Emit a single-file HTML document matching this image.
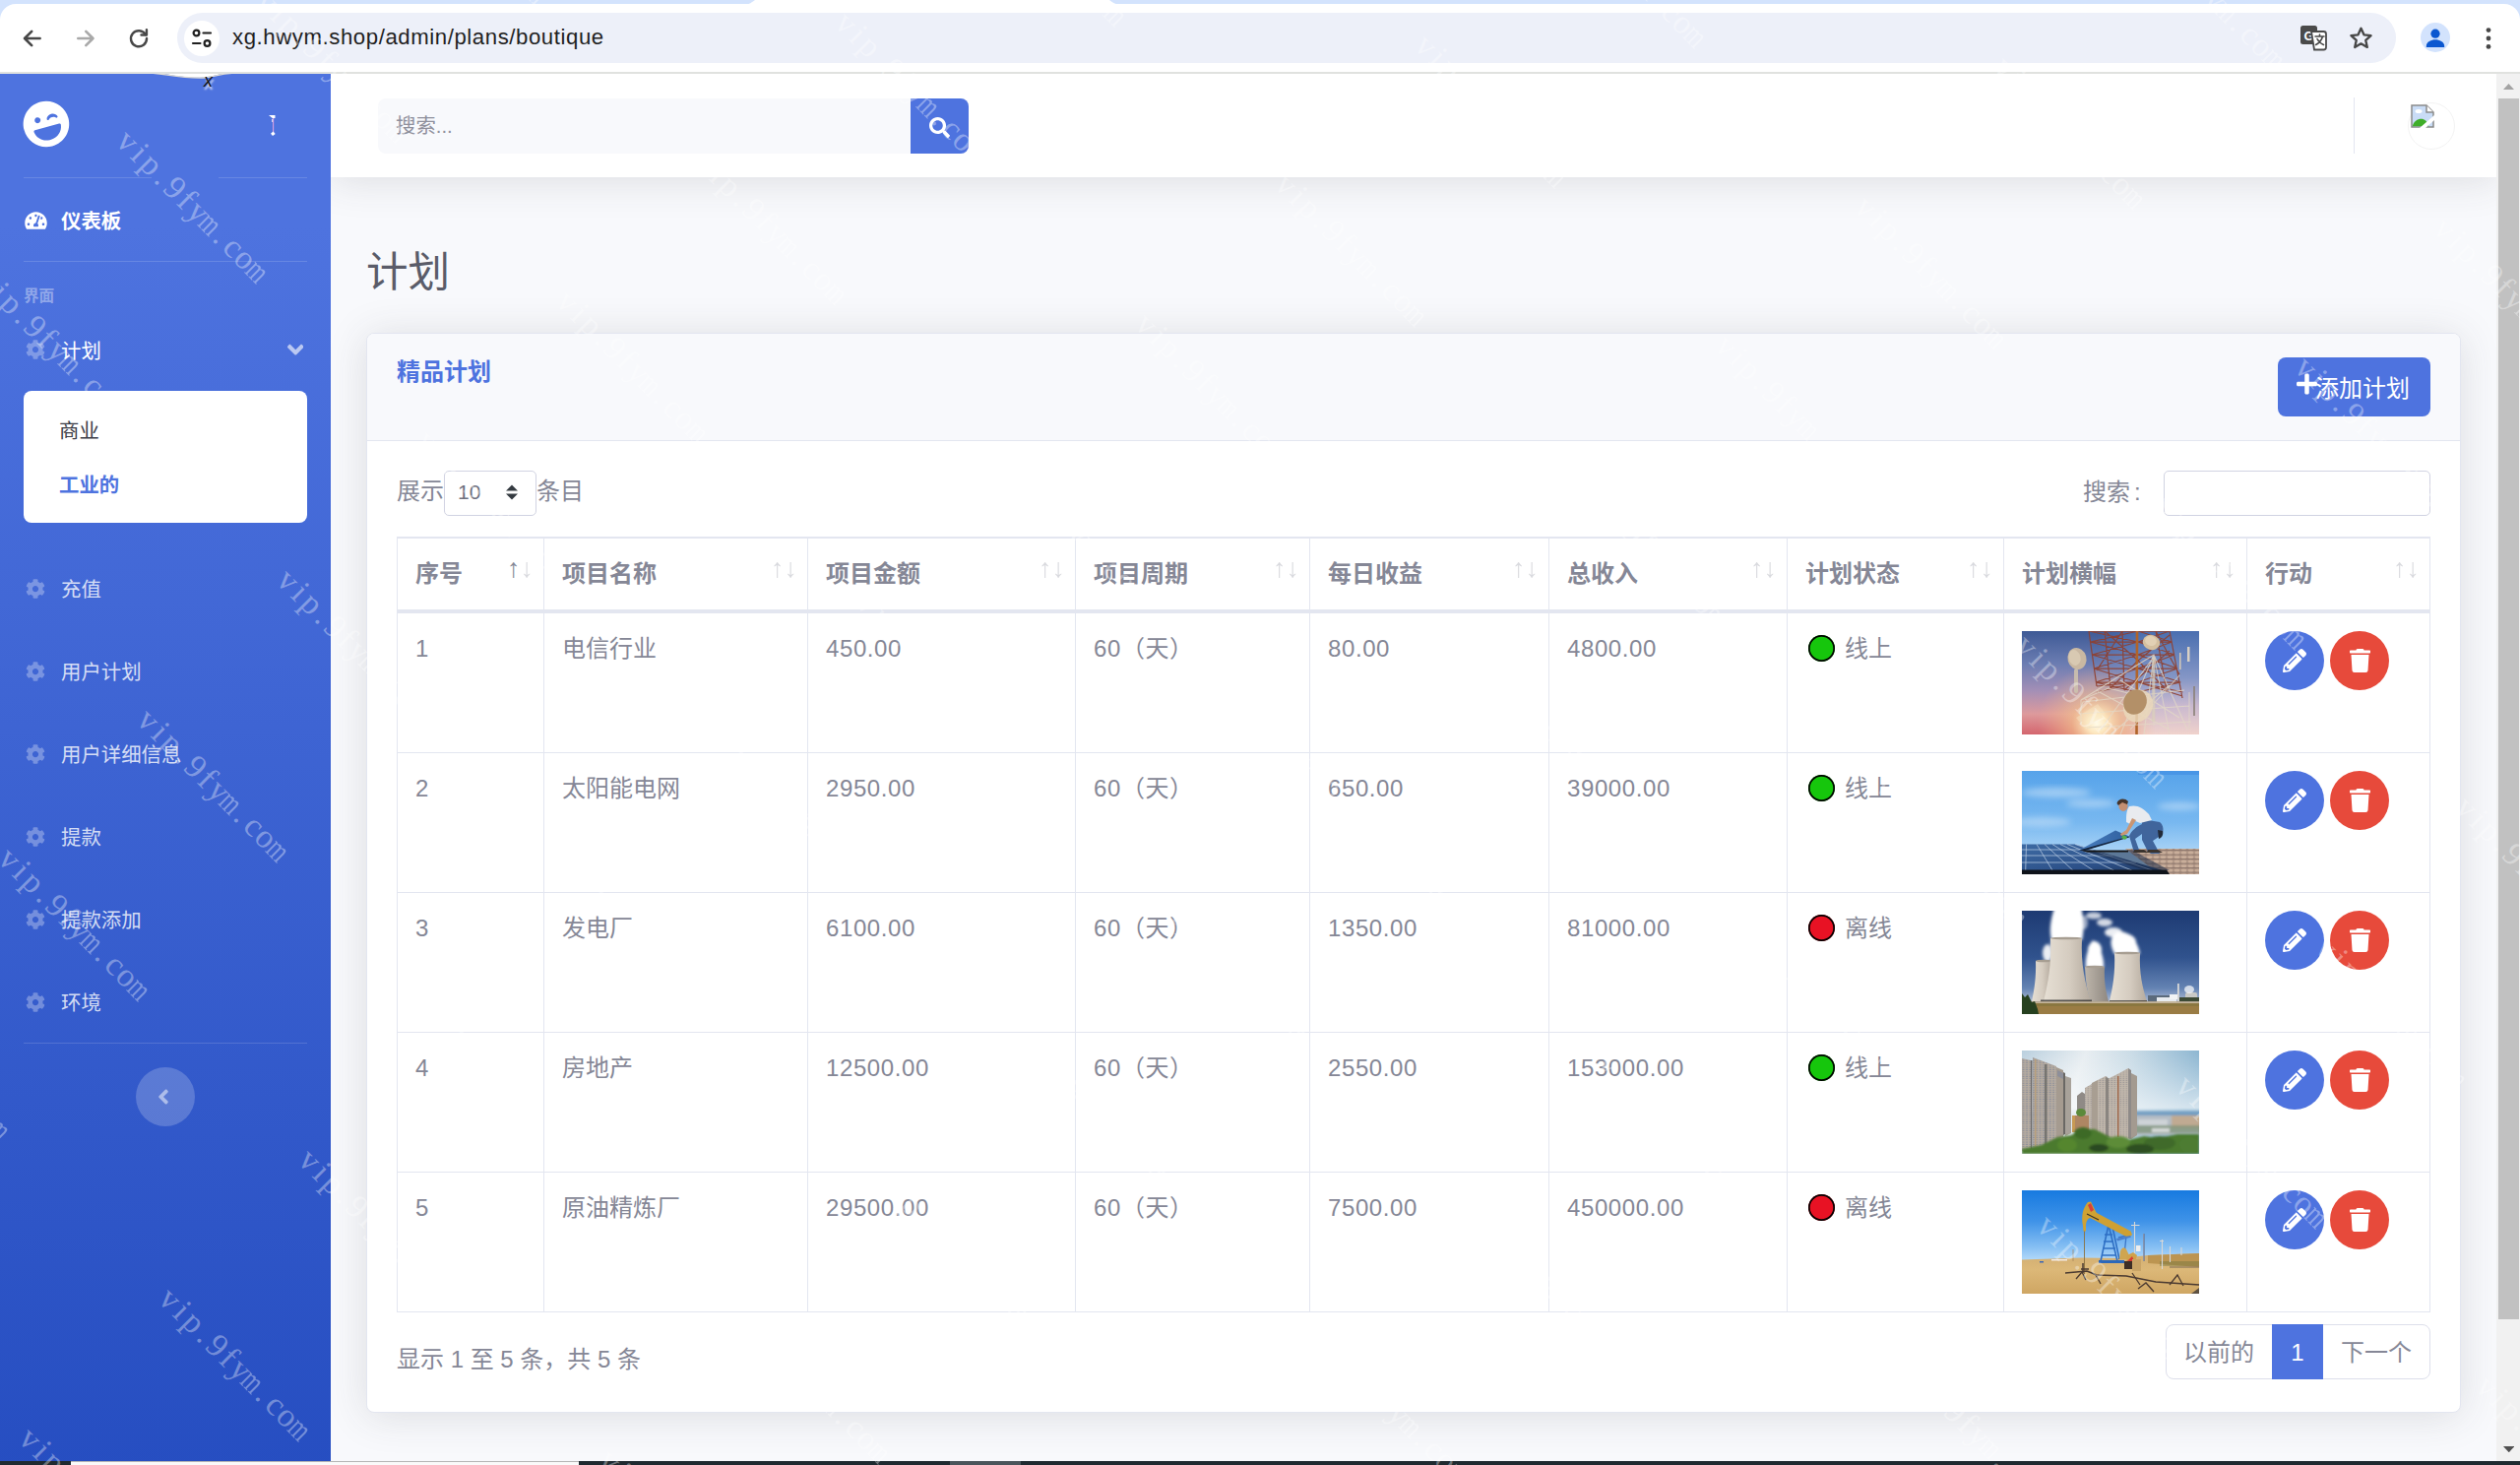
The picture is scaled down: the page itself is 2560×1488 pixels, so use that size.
<!DOCTYPE html>
<html lang="zh-CN">
<head>
<meta charset="utf-8">
<title>计划</title>
<style>
*{box-sizing:border-box;margin:0;padding:0}
html,body{width:2560px;height:1488px;overflow:hidden;background:#fff}
body{position:relative;font-family:"Liberation Sans","Noto Sans CJK SC",sans-serif;color:#858796;font-size:24px;line-height:36px}
.abs{position:absolute}
svg{display:block}

/* ---------- browser chrome ---------- */
#tabstrip{left:0;top:0;width:2560px;height:20px;background:#d3e3fd}
#toolbar{left:0;top:4px;width:2560px;height:71px;background:#fff;border-radius:16px 16px 0 0;border-bottom:2px solid #e0e2df}
#omni{left:180px;top:13px;width:2254px;height:51px;border-radius:26px;background:#edf0f9}
#siteinfo{left:187px;top:21px;width:36px;height:36px;border-radius:18px;background:#fff}
#url{left:236px;top:20px;height:36px;line-height:36px;font-size:22.200px;color:#1f1f1f;white-space:nowrap;letter-spacing:.570px}

/* ---------- sidebar ---------- */
#sidebar{left:0;top:75px;width:336px;height:1409px;background:linear-gradient(180deg,#4e73df 10%,#224abe 100%) 0 0/100% 1550px no-repeat;overflow:hidden}
.sdiv{position:absolute;left:24px;width:288px;height:0;border-top:1.5px solid rgba(255,255,255,.15)}
.navt{left:62px;height:36px;line-height:36px;color:rgba(255,255,255,.8);font-size:20.400px;white-space:nowrap}

#page{left:0;top:0;width:2560px;height:1488px;clip-path:inset(75px 0 4px 0)}
/* ---------- topbar ---------- */
#topbar{left:336px;top:75px;width:2201px;height:105px;background:#fff;box-shadow:0 3px 40px 0 rgba(58,59,69,.15)}
#content{left:336px;top:180px;width:2201px;height:1304px;background:#f8f9fc}

/* ---------- card ---------- */
#card{left:372px;top:338px;width:2128px;height:1097px;background:#fff;border:1px solid #e3e6f0;border-radius:8px;box-shadow:0 3px 40px 0 rgba(58,59,69,.15)}
#cardhead{left:0;top:0;width:100%;height:109px;background:#f8f9fc;border-bottom:1px solid #e3e6f0;border-radius:7px 7px 0 0}

/* ---------- table ---------- */
#tbl{left:403px;top:545px;border-collapse:separate;border-spacing:0;table-layout:fixed;width:2066px;color:#858796;border-left:1px solid #e3e6f0;border-top:2px solid #e3e6f0}
#tbl th,#tbl td{border-right:1px solid #e3e6f0;border-bottom:1px solid #e3e6f0;padding:0 0 0 18px;vertical-align:top;text-align:left;font-size:24px;line-height:36px;white-space:nowrap;position:relative;overflow:hidden}
#tbl th{height:76px;border-bottom:4px solid #e3e6f0;font-weight:bold;padding-top:18px}
#tbl td{height:142px;padding-top:18px}
#tbl td.n{letter-spacing:.600px}
.sort{position:absolute;right:10px;top:12px;font-size:27px;line-height:36px;font-weight:normal;color:#858796}
.sort b,.sort i{font-weight:normal;font-style:normal;opacity:.3}
.sort.act b{opacity:1}
.dot{display:inline-block;width:27px;height:27px;border-radius:14px;box-shadow:inset 0 0 0 1.700px #000;vertical-align:-5px;margin:0 10px 0 3px}
.g{background:#16c60c}.r{background:#e81224}
.btnc{position:absolute;top:18px;width:60px;height:60px;border-radius:30px;display:flex;align-items:center;justify-content:center}
.be{left:18px;background:#4e73df}.bd{left:84px;background:#e74a3b}
.thumb{position:absolute;left:18px;top:18px;width:180px;height:105px;overflow:hidden;background:#6aa3dd}
#wm{left:0;top:0;width:2560px;height:1488px;overflow:hidden;pointer-events:none}
#wm i{position:absolute;font:normal 34px/34px "Liberation Serif",serif;color:rgba(255,255,255,.36);white-space:nowrap;transform-origin:0 0;transform:rotate(45deg) translate(3px,-17px)}
#wm b{display:inline-block;width:16.900px;text-align:center;font-weight:normal}
#wm u{display:inline-block;text-decoration:none;transform:scaleX(.68);transform-origin:0 0}
</style>
</head>
<body>
<!-- ================= browser chrome ================= -->
<div id="tabstrip" class="abs"></div>
<div id="toolbar" class="abs"></div>
<svg class="abs" style="left:756px;top:0" width="382" height="5" viewBox="0 0 382 5"><path d="M0 4.500C5 4.500 8 2.500 11 0H371C374 2.500 377 4.500 382 4.500V5H0z" fill="#fff"/></svg>
<div id="omni" class="abs"></div>
<div id="siteinfo" class="abs"></div>
<svg class="abs" style="left:19px;top:24px" width="30" height="30" viewBox="0 0 30 30" fill="none" stroke="#474747" stroke-width="2.600" stroke-linecap="round" stroke-linejoin="round"><path d="M21.600 15H6M13.200 7.800L6 15l7.200 7.200"/></svg>
<svg class="abs" style="left:72px;top:24px" width="30" height="30" viewBox="0 0 30 30" fill="none" stroke="#a9a9a9" stroke-width="2.6" stroke-linecap="round" stroke-linejoin="round"><path d="M7.300 15H22.500M15.300 7.800L22.500 15l-7.200 7.200"/></svg>
<svg class="abs" style="left:127px;top:25px" width="28" height="28" viewBox="0 0 30 30" fill="none" stroke="#474747" stroke-width="2.6" stroke-linecap="round" stroke-linejoin="round"><path d="M22.500 11A8.600 8.600 0 1 0 23.600 15"/><path d="M23.500 5.500V11.300H17.700" /></svg>
<svg class="abs" style="left:194px;top:28px" width="22" height="22" viewBox="0 0 22 22" fill="none" stroke="#1f1f1f" stroke-width="2.200" stroke-linecap="round"><circle cx="5.500" cy="5.500" r="2.900"/><path d="M12.500 5.500H20"/><circle cx="16.500" cy="16" r="2.900"/><path d="M2 16h7.500"/></svg>
<div id="url" class="abs">xg.hwym.shop/admin/plans/boutique</div>
<!-- translate -->
<svg class="abs" style="left:2336px;top:24px" width="28" height="28" viewBox="0 0 28 28"><rect x="1" y="2" width="17" height="19" rx="2.500" fill="#4a4a4a"/><text x="9.500" y="16.500" font-family="Liberation Sans, sans-serif" font-weight="bold" font-size="13" fill="#fff" text-anchor="middle">G</text><path d="M12 8h12.500a2.500 2.500 0 0 1 2.500 2.500V24a2.500 2.500 0 0 1-2.500 2.500H15z" fill="#fff" stroke="#4a4a4a" stroke-width="1.800"/><path d="M16 13h9M20.500 11v2M23.500 13c-1 4-4 7-7 8.500M18 15.500c1.500 3 4 5 6.500 6" fill="none" stroke="#4a4a4a" stroke-width="1.600" stroke-linecap="round"/></svg>
<!-- star -->
<svg class="abs" style="left:2385px;top:24.500px" width="27" height="27" viewBox="0 0 30 30" fill="none" stroke="#474747" stroke-width="2.600" stroke-linejoin="round"><path d="M15 4.200l3.300 7.300 7.900.8-5.900 5.400 1.700 7.800L15 21.500l-7 4 1.700-7.800-5.900-5.400 7.900-.8z"/></svg>
<!-- avatar -->
<div class="abs" style="left:2459px;top:23px;width:30px;height:30px;border-radius:15px;background:#d3e3fd"></div>
<svg class="abs" style="left:2459px;top:23px" width="30" height="30" viewBox="0 0 30 30" fill="#0b57d0"><circle cx="15" cy="11.200" r="4.600"/><path d="M5.800 24c0-4.600 5.200-6.700 9.200-6.700s9.200 2.100 9.200 6.700v1H5.800z"/></svg>
<!-- dots -->
<svg class="abs" style="left:2521.500px;top:23.500px" width="12" height="30" viewBox="0 0 12 30" fill="#474747"><circle cx="6" cy="6.600" r="2.400"/><circle cx="6" cy="15" r="2.400"/><circle cx="6" cy="23.400" r="2.400"/></svg>

<!-- ================= page ================= -->
<div id="page" class="abs">
<div id="content" class="abs"></div>
<div id="topbar" class="abs"></div>

<!-- topbar search -->
<div class="abs" style="left:384px;top:100px;width:541px;height:56px;background:#f8f9fc;border-radius:8px 0 0 8px"></div>
<div class="abs" style="left:402px;top:110px;font-size:20.400px;line-height:36px;color:#8f909c;white-space:nowrap">搜索...</div>
<div class="abs" style="left:925px;top:100px;width:59px;height:56px;background:#4e73df;border-radius:0 8px 8px 0"></div>
<svg class="abs" style="left:944px;top:119px" width="21" height="21" viewBox="0 0 512 512" fill="#fff"><path d="M505 442.700L405.300 343c-4.500-4.500-10.600-7-17-7H372c27.600-35.300 44-79.700 44-128C416 93.100 322.900 0 208 0S0 93.100 0 208s93.100 208 208 208c48.300 0 92.700-16.400 128-44v16.300c0 6.400 2.500 12.500 7 17l99.700 99.700c9.400 9.400 24.600 9.400 33.900 0l28.300-28.300c9.400-9.400 9.400-24.600.1-34zM208 336c-70.700 0-128-57.200-128-128 0-70.700 57.200-128 128-128 70.700 0 128 57.200 128 128 0 70.700-57.200 128-128 128z"/></svg>
<!-- topbar right -->
<div class="abs" style="left:2391px;top:99px;width:1px;height:57px;background:#e3e6f0"></div>
<div class="abs" style="left:2446px;top:104px;width:48px;height:48px;border-radius:24px;border:1px solid #f3f3f3"></div>
<svg class="abs" style="left:2449px;top:106px" width="24" height="24" viewBox="0 0 24 24"><path d="M1 1h15l7 7v15H1z" fill="#c9dcf6" stroke="#8a8a8a" stroke-width="1.500"/><path d="M16 1v7h7" fill="#fff" stroke="#8a8a8a" stroke-width="1.500"/><path d="M1.800 22.200c1-5 5-7.500 9-7.500 3 0 6 2 7.500 7.500z" fill="#3fae29"/><ellipse cx="8" cy="7" rx="3.500" ry="2" fill="#fff"/><path d="M9 24L24 11v5L15 24z" fill="#fff"/></svg>

<!-- ================= sidebar ================= -->
<div id="sidebar" class="abs">
<svg class="abs" style="left:23px;top:27px;transform:rotate(-15deg)" width="48" height="48" viewBox="0 0 496 512" fill="#fff"><path d="M248 8C111 8 0 119 0 256s111 248 248 248 248-111 248-248S385 8 248 8zm20.100 198.100c4-25.200 34.200-42.100 59.900-42.100s55.900 16.900 59.900 42.100c1.700 11.100-11.400 18.300-19.800 10.800l-9.500-8.500c-14.800-13.200-46.200-13.200-61 0L288 217c-8.400 7.400-21.600.3-19.900-10.900zM168 160c17.700 0 32 14.300 32 32s-14.300 32-32 32-32-14.300-32-32 14.300-32 32-32zm230.900 146C390 377 329.400 432 256 432h-16c-73.400 0-134-55-142.900-126-1.200-9.500 6.300-18 15.900-18h270c9.600 0 17.100 8.400 15.900 18z"/></svg>
<div class="sdiv" style="top:105px;width:130px"></div><div class="sdiv" style="top:105px;left:222px;width:90px"></div>
<svg class="abs" style="left:25px;top:139px" width="23" height="20" viewBox="0 0 576 512" fill="#fff"><path d="M288 32C128.940 32 0 160.940 0 320c0 52.800 14.250 102.260 39.060 144.800 5.610 9.620 16.300 15.200 27.440 15.200h443c11.140 0 21.830-5.580 27.440-15.200C561.750 422.260 576 372.800 576 320c0-159.060-128.940-288-288-288zm0 64c14.710 0 26.580 10.130 30.320 23.650-1.110 2.260-2.640 4.230-3.450 6.670l-9.220 27.670c-5.130 3.490-10.970 6.010-17.640 6.010-17.670 0-32-14.330-32-32S270.330 96 288 96zM96 384c-17.670 0-32-14.330-32-32s14.330-32 32-32 32 14.330 32 32-14.330 32-32 32zm48-160c-17.670 0-32-14.330-32-32s14.330-32 32-32 32 14.330 32 32-14.330 32-32 32zm246.770-72.410l-61.330 184C343.130 347.330 352 364.540 352 384c0 11.720-3.380 22.550-8.880 32H232.880c-5.500-9.450-8.880-20.280-8.880-32 0-33.940 26.500-61.430 59.900-63.590l61.340-184.010c4.170-12.560 17.730-19.450 30.360-15.170 12.570 4.190 19.350 17.790 15.170 30.360zm14.660 57.200l15.520-46.550c3.470-1.290 7.130-2.230 11.050-2.230 17.670 0 32 14.330 32 32s-14.330 32-32 32c-11.380-.01-20.890-6.280-26.570-15.220zM480 384c-17.670 0-32-14.330-32-32s14.330-32 32-32 32 14.330 32 32-14.330 32-32 32z"/></svg>
<div class="abs navt" style="top:132px;color:#fff;font-weight:bold">仪表板</div>
<div class="sdiv" style="top:190px"></div>
<div class="abs" style="left:24px;top:211px;font-size:15.600px;line-height:30px;font-weight:bold;color:rgba(255,255,255,.4);white-space:nowrap">界面</div>
<svg class="abs" style="left:26px;top:270px" width="20" height="20" viewBox="0 0 512 512" fill="rgba(255,255,255,.3)"><path d="M487.4 315.7l-42.6-24.600c4.300-23.200 4.300-47 0-70.200l42.600-24.600c4.900-2.800 7.100-8.600 5.500-14-11.100-35.600-30-67.800-54.700-94.600-3.800-4.100-10-5.100-14.800-2.300L380.800 110c-17.900-15.400-38.500-27.300-60.800-35.100V25.800c0-5.600-3.900-10.500-9.400-11.700-36.700-8.200-74.300-7.800-109.200 0-5.500 1.200-9.400 6.100-9.400 11.700V75c-22.200 7.900-42.800 19.800-60.800 35.100L88.700 85.500c-4.900-2.800-11-1.900-14.800 2.300-24.700 26.700-43.600 58.900-54.700 94.600-1.700 5.400.6 11.200 5.500 14L67.300 221c-4.300 23.200-4.300 47 0 70.200l-42.600 24.600c-4.900 2.800-7.100 8.600-5.500 14 11.100 35.600 30 67.800 54.700 94.600 3.800 4.100 10 5.100 14.800 2.300l42.600-24.600c17.900 15.400 38.500 27.300 60.800 35.100v49.200c0 5.600 3.900 10.500 9.400 11.700 36.700 8.200 74.300 7.800 109.200 0 5.500-1.200 9.400-6.100 9.400-11.700v-49.200c22.200-7.900 42.800-19.800 60.800-35.100l42.600 24.600c4.900 2.800 11 1.900 14.800-2.300 24.700-26.700 43.600-58.900 54.700-94.600 1.500-5.500-.7-11.300-5.600-14.100zM256 336c-44.100 0-80-35.900-80-80s35.900-80 80-80 80 35.900 80 80-35.900 80-80 80z"/></svg>
<div class="abs navt" style="top:263.500px;color:#fff">计划</div>
<svg class="abs" style="left:291.500px;top:266.500px" width="16.500" height="26.400" viewBox="0 0 320 512" fill="rgba(255,255,255,.62)"><path d="M143 352.300L7 216.300c-9.400-9.400-9.400-24.600 0-33.900l22.600-22.600c9.400-9.400 24.600-9.400 33.900 0l96.400 96.400 96.400-96.400c9.400-9.400 24.600-9.400 33.900 0l22.600 22.600c9.400 9.400 9.400 24.600 0 33.900l-136 136c-9.200 9.400-24.400 9.400-33.800 0z"/></svg>
<div class="abs" style="left:24px;top:322px;width:288px;height:134px;background:#fff;border-radius:8px"></div>
<div class="abs" style="left:60px;top:345px;font-size:20.400px;line-height:36px;color:#3a3b45;white-space:nowrap">商业</div>
<div class="abs" style="left:60px;top:399.500px;font-size:20.400px;line-height:36px;color:#4e73df;font-weight:bold;white-space:nowrap">工业的</div>
<svg class="abs" style="left:26px;top:513px" width="20" height="20" viewBox="0 0 512 512" fill="rgba(255,255,255,.3)"><path d="M487.4 315.7l-42.6-24.600c4.300-23.200 4.300-47 0-70.200l42.600-24.600c4.900-2.800 7.100-8.600 5.500-14-11.100-35.600-30-67.800-54.700-94.600-3.800-4.100-10-5.100-14.800-2.300L380.800 110c-17.900-15.400-38.500-27.300-60.800-35.100V25.800c0-5.600-3.900-10.500-9.400-11.700-36.700-8.200-74.300-7.800-109.200 0-5.500 1.200-9.400 6.100-9.400 11.700V75c-22.200 7.900-42.800 19.800-60.800 35.100L88.700 85.500c-4.900-2.800-11-1.900-14.800 2.300-24.700 26.700-43.600 58.900-54.700 94.600-1.700 5.400.6 11.200 5.500 14L67.300 221c-4.300 23.200-4.300 47 0 70.200l-42.600 24.600c-4.900 2.800-7.100 8.600-5.500 14 11.100 35.600 30 67.800 54.700 94.600 3.800 4.100 10 5.100 14.800 2.300l42.600-24.600c17.900 15.400 38.500 27.300 60.800 35.100v49.200c0 5.600 3.900 10.500 9.400 11.700 36.700 8.200 74.300 7.800 109.200 0 5.500-1.200 9.400-6.100 9.400-11.700v-49.200c22.200-7.900 42.800-19.800 60.800-35.100l42.600 24.600c4.900 2.800 11 1.900 14.800-2.300 24.700-26.700 43.600-58.900 54.700-94.600 1.500-5.500-.7-11.300-5.600-14.100zM256 336c-44.100 0-80-35.900-80-80s35.900-80 80-80 80 35.900 80 80-35.900 80-80 80z"/></svg>
<div class="abs navt" style="top:506px">充值</div>
<svg class="abs" style="left:26px;top:597px" width="20" height="20" viewBox="0 0 512 512" fill="rgba(255,255,255,.3)"><path d="M487.4 315.7l-42.6-24.600c4.300-23.200 4.300-47 0-70.200l42.600-24.600c4.900-2.800 7.100-8.600 5.500-14-11.100-35.600-30-67.800-54.700-94.600-3.800-4.100-10-5.100-14.800-2.300L380.800 110c-17.900-15.400-38.500-27.300-60.800-35.100V25.800c0-5.600-3.900-10.500-9.400-11.700-36.700-8.200-74.300-7.800-109.200 0-5.500 1.200-9.400 6.100-9.400 11.700V75c-22.200 7.900-42.800 19.800-60.800 35.100L88.700 85.500c-4.900-2.800-11-1.900-14.800 2.300-24.700 26.700-43.600 58.900-54.700 94.600-1.700 5.400.6 11.200 5.500 14L67.300 221c-4.300 23.200-4.300 47 0 70.200l-42.600 24.600c-4.900 2.800-7.100 8.600-5.500 14 11.100 35.600 30 67.800 54.700 94.600 3.800 4.100 10 5.100 14.800 2.300l42.600-24.600c17.900 15.400 38.500 27.300 60.800 35.100v49.200c0 5.600 3.900 10.500 9.400 11.700 36.700 8.200 74.300 7.800 109.200 0 5.500-1.200 9.400-6.100 9.400-11.700v-49.200c22.200-7.900 42.800-19.800 60.800-35.100l42.600 24.600c4.900 2.800 11 1.900 14.800-2.300 24.700-26.700 43.600-58.900 54.700-94.600 1.500-5.500-.7-11.300-5.600-14.100zM256 336c-44.100 0-80-35.900-80-80s35.900-80 80-80 80 35.900 80 80-35.900 80-80 80z"/></svg>
<div class="abs navt" style="top:590px">用户计划</div>
<svg class="abs" style="left:26px;top:681px" width="20" height="20" viewBox="0 0 512 512" fill="rgba(255,255,255,.3)"><path d="M487.4 315.7l-42.6-24.600c4.300-23.200 4.300-47 0-70.200l42.600-24.600c4.900-2.800 7.100-8.600 5.500-14-11.100-35.600-30-67.800-54.700-94.600-3.800-4.100-10-5.100-14.800-2.300L380.800 110c-17.900-15.400-38.500-27.300-60.800-35.100V25.800c0-5.600-3.900-10.500-9.400-11.700-36.700-8.200-74.300-7.800-109.200 0-5.500 1.200-9.400 6.100-9.400 11.700V75c-22.200 7.900-42.800 19.800-60.800 35.100L88.700 85.500c-4.900-2.800-11-1.900-14.800 2.300-24.700 26.700-43.600 58.900-54.700 94.600-1.700 5.400.6 11.200 5.500 14L67.300 221c-4.300 23.200-4.300 47 0 70.200l-42.600 24.600c-4.900 2.800-7.100 8.600-5.500 14 11.100 35.600 30 67.800 54.700 94.600 3.800 4.100 10 5.100 14.800 2.300l42.600-24.600c17.900 15.400 38.500 27.300 60.800 35.100v49.200c0 5.600 3.900 10.500 9.400 11.700 36.700 8.200 74.300 7.800 109.200 0 5.500-1.200 9.400-6.100 9.400-11.700v-49.200c22.200-7.900 42.800-19.800 60.800-35.100l42.600 24.600c4.900 2.800 11 1.900 14.800-2.300 24.700-26.700 43.600-58.900 54.700-94.600 1.500-5.500-.7-11.300-5.600-14.100zM256 336c-44.100 0-80-35.900-80-80s35.900-80 80-80 80 35.900 80 80-35.900 80-80 80z"/></svg>
<div class="abs navt" style="top:674px">用户详细信息</div>
<svg class="abs" style="left:26px;top:765px" width="20" height="20" viewBox="0 0 512 512" fill="rgba(255,255,255,.3)"><path d="M487.4 315.7l-42.6-24.600c4.300-23.200 4.300-47 0-70.200l42.600-24.600c4.900-2.800 7.100-8.600 5.500-14-11.100-35.600-30-67.800-54.700-94.600-3.800-4.100-10-5.100-14.800-2.300L380.800 110c-17.900-15.400-38.500-27.300-60.800-35.100V25.800c0-5.600-3.900-10.500-9.400-11.700-36.700-8.200-74.300-7.800-109.200 0-5.500 1.200-9.400 6.100-9.400 11.700V75c-22.200 7.900-42.800 19.800-60.800 35.100L88.700 85.500c-4.900-2.800-11-1.900-14.800 2.300-24.700 26.700-43.600 58.900-54.700 94.600-1.700 5.400.6 11.200 5.500 14L67.300 221c-4.300 23.200-4.300 47 0 70.200l-42.600 24.600c-4.900 2.800-7.100 8.600-5.500 14 11.100 35.600 30 67.800 54.700 94.600 3.800 4.100 10 5.100 14.800 2.300l42.600-24.600c17.900 15.400 38.500 27.300 60.800 35.100v49.200c0 5.600 3.900 10.500 9.400 11.700 36.700 8.200 74.300 7.800 109.200 0 5.500-1.200 9.400-6.100 9.400-11.700v-49.200c22.200-7.900 42.800-19.800 60.800-35.100l42.600 24.600c4.900 2.800 11 1.900 14.800-2.300 24.700-26.700 43.600-58.900 54.700-94.600 1.500-5.500-.7-11.300-5.600-14.100zM256 336c-44.100 0-80-35.900-80-80s35.900-80 80-80 80 35.900 80 80-35.900 80-80 80z"/></svg>
<div class="abs navt" style="top:758px">提款</div>
<svg class="abs" style="left:26px;top:849px" width="20" height="20" viewBox="0 0 512 512" fill="rgba(255,255,255,.3)"><path d="M487.4 315.7l-42.6-24.600c4.300-23.200 4.300-47 0-70.200l42.600-24.600c4.900-2.800 7.100-8.600 5.500-14-11.100-35.600-30-67.800-54.700-94.600-3.800-4.100-10-5.100-14.800-2.300L380.800 110c-17.900-15.400-38.500-27.300-60.800-35.100V25.800c0-5.600-3.900-10.500-9.400-11.700-36.700-8.200-74.300-7.800-109.200 0-5.500 1.200-9.400 6.100-9.400 11.700V75c-22.200 7.900-42.800 19.800-60.800 35.100L88.700 85.500c-4.900-2.800-11-1.900-14.800 2.300-24.700 26.700-43.600 58.900-54.700 94.600-1.700 5.400.6 11.200 5.500 14L67.300 221c-4.300 23.200-4.300 47 0 70.200l-42.600 24.600c-4.900 2.800-7.100 8.600-5.500 14 11.100 35.600 30 67.800 54.700 94.600 3.800 4.100 10 5.100 14.800 2.300l42.600-24.600c17.900 15.400 38.500 27.300 60.800 35.100v49.200c0 5.600 3.900 10.500 9.400 11.700 36.700 8.200 74.300 7.800 109.200 0 5.500-1.200 9.400-6.100 9.400-11.700v-49.200c22.200-7.900 42.800-19.800 60.800-35.100l42.600 24.600c4.900 2.800 11 1.900 14.800-2.300 24.700-26.700 43.600-58.900 54.700-94.600 1.500-5.500-.7-11.300-5.600-14.100zM256 336c-44.100 0-80-35.900-80-80s35.900-80 80-80 80 35.900 80 80-35.900 80-80 80z"/></svg>
<div class="abs navt" style="top:842px">提款添加</div>
<svg class="abs" style="left:26px;top:933px" width="20" height="20" viewBox="0 0 512 512" fill="rgba(255,255,255,.3)"><path d="M487.4 315.7l-42.6-24.600c4.300-23.200 4.300-47 0-70.200l42.600-24.600c4.900-2.800 7.100-8.600 5.500-14-11.100-35.600-30-67.800-54.700-94.600-3.800-4.100-10-5.100-14.800-2.300L380.800 110c-17.900-15.400-38.500-27.300-60.800-35.100V25.800c0-5.600-3.900-10.500-9.400-11.700-36.700-8.200-74.300-7.800-109.200 0-5.500 1.200-9.400 6.100-9.400 11.700V75c-22.200 7.900-42.800 19.800-60.800 35.100L88.700 85.500c-4.900-2.800-11-1.900-14.800 2.300-24.700 26.700-43.600 58.900-54.700 94.600-1.700 5.400.6 11.200 5.500 14L67.300 221c-4.300 23.200-4.300 47 0 70.200l-42.600 24.600c-4.900 2.800-7.100 8.600-5.500 14 11.100 35.600 30 67.800 54.700 94.600 3.800 4.100 10 5.100 14.800 2.300l42.600-24.600c17.900 15.400 38.500 27.300 60.800 35.100v49.200c0 5.600 3.900 10.500 9.400 11.700 36.700 8.200 74.300 7.800 109.200 0 5.500-1.200 9.400-6.100 9.400-11.700v-49.200c22.200-7.900 42.800-19.800 60.800-35.100l42.600 24.600c4.900 2.800 11 1.900 14.800-2.300 24.700-26.700 43.600-58.900 54.700-94.600 1.500-5.500-.7-11.300-5.600-14.100zM256 336c-44.100 0-80-35.900-80-80s35.900-80 80-80 80 35.900 80 80-35.900 80-80 80z"/></svg>
<div class="abs navt" style="top:926px">环境</div>
<div class="sdiv" style="top:984px"></div>
<div class="abs" style="left:138px;top:1009px;width:60px;height:60px;border-radius:30px;background:rgba(255,255,255,.2)"></div>
<svg class="abs" style="left:160px;top:1027px" width="12" height="24" viewBox="0 0 256 512" fill="rgba(255,255,255,.5)"><path d="M31.700 239l136-136c9.400-9.400 24.600-9.400 33.900 0l22.600 22.600c9.400 9.400 9.400 24.600 0 33.900L127.900 256l96.400 96.400c9.400 9.400 9.400 24.600 0 33.900L201.700 409c-9.400 9.400-24.600 9.400-33.900 0l-136-136c-9.500-9.400-9.500-24.600-.1-34z"/></svg>
</div>

<svg class="abs" style="left:150px;top:70px" width="90" height="12" viewBox="0 0 90 12"><path d="M0 3.500C14 3 28 8.800 53 8.800C66 8.500 74 3.500 90 3.500V0H0z" fill="#fff"/><path d="M0 4.200C14 3.700 28 9.200 53 9.200C66 9 74 4.200 90 4.200" fill="none" stroke="#dedcd4" stroke-width="1.300"/></svg>
<div class="abs" style="left:207px;top:71.500px;font-size:18px;line-height:20px;font-style:italic;color:#111;text-shadow:1px 3px 2px rgba(255,255,255,.9)">x</div>
<svg class="abs" style="left:272.500px;top:117px" width="7" height="21" viewBox="0 0 7 21"><path d="M0 0h6.500v3L4 3.200z" fill="#fff"/><path d="M3.300 4h1.500v3h-1.500z" fill="#fff"/><path d="M4.600 3v15" stroke="#d9a0e0" stroke-width="1.100"/><path d="M4.500 16.500l2.200 2.500-2.700 2-2-2.200z" fill="#fff"/></svg>
<!-- ================= card ================= -->
<div class="abs" style="left:372px;top:248.500px;font-size:42.500px;line-height:56px;color:#5a5c69;white-space:nowrap">计划</div>
<div id="card" class="abs"><div id="cardhead" class="abs"></div></div>

<div class="abs" style="left:403px;top:359.500px;font-size:24px;line-height:36px;font-weight:bold;color:#4e73df;white-space:nowrap">精品计划</div>
<div class="abs" style="left:2314px;top:363px;width:155px;height:60px;border-radius:8px;background:#4e73df"></div>
<svg class="abs" style="left:2333px;top:378px" width="21" height="24" viewBox="0 0 448 512" fill="#fff"><path d="M416 208H272V64c0-17.670-14.330-32-32-32h-32c-17.670 0-32 14.330-32 32v144H32c-17.670 0-32 14.330-32 32v32c0 17.670 14.330 32 32 32h144v144c0 17.670 14.330 32 32 32h32c17.670 0 32-14.330 32-32V304h144c17.670 0 32-14.330 32-32v-32c0-17.670-14.330-32-32-32z"/></svg>
<div class="abs" style="left:2352px;top:377px;font-size:24px;line-height:36px;color:#fff;white-space:nowrap">添加计划</div>

<div class="abs" style="left:403px;top:481px;font-size:24px;line-height:36px;white-space:nowrap">展示</div>
<div class="abs" style="left:451px;top:478px;width:94px;height:46px;border:1px solid #d1d3e2;border-radius:5px;background:#fff"></div>
<div class="abs" style="left:465px;top:482px;font-size:21px;line-height:36px;color:#6e707e;white-space:nowrap">10</div>
<svg class="abs" style="left:514px;top:492px" width="12" height="16" viewBox="0 0 4 5" fill="#343a40"><path d="M2 0L0 2h4zm0 5L0 3h4z"/></svg>
<div class="abs" style="left:545px;top:481px;font-size:24px;line-height:36px;white-space:nowrap">条目</div>

<div class="abs" style="left:2116px;top:482px;font-size:24px;line-height:36px;white-space:nowrap">搜索<span style="margin-left:4px">:</span></div>
<div class="abs" style="left:2198px;top:478px;width:271px;height:46px;border:1px solid #d1d3e2;border-radius:5px;background:#fff"></div>

<table id="tbl" class="abs"><colgroup><col style="width:149px"><col style="width:268px"><col style="width:272px"><col style="width:238px"><col style="width:243px"><col style="width:242px"><col style="width:220px"><col style="width:247px"><col style="width:186px"></colgroup>
<thead><tr><th>序号<span class="sort act"><b>↑</b><i>↓</i></span></th><th>项目名称<span class="sort"><b>↑</b><i>↓</i></span></th><th>项目金额<span class="sort"><b>↑</b><i>↓</i></span></th><th>项目周期<span class="sort"><b>↑</b><i>↓</i></span></th><th>每日收益<span class="sort"><b>↑</b><i>↓</i></span></th><th>总收入<span class="sort"><b>↑</b><i>↓</i></span></th><th>计划状态<span class="sort"><b>↑</b><i>↓</i></span></th><th>计划横幅<span class="sort"><b>↑</b><i>↓</i></span></th><th>行动<span class="sort"><b>↑</b><i>↓</i></span></th></tr></thead><tbody>
<tr><td class="n">1</td><td>电信行业</td><td class="n">450.00</td><td class="n">60（天）</td><td class="n">80.00</td><td class="n">4800.00</td><td><span class="dot g"></span>线上</td><td><div class="thumb" id="th1"><svg width="180" height="105" viewBox="0 0 180 105" preserveAspectRatio="none"><defs><linearGradient id="a1" x1="0" y1="0" x2="0" y2="1"><stop offset="0" stop-color="#3e5a96"/><stop offset=".32" stop-color="#6c7db2"/><stop offset=".58" stop-color="#a48fb6"/><stop offset=".8" stop-color="#dd9a9c"/><stop offset="1" stop-color="#d4666e"/></linearGradient>
<linearGradient id="a4" x1="0" y1="0" x2="0" y2="1"><stop offset="0" stop-color="#4a6fb0"/><stop offset=".45" stop-color="#8496c6"/><stop offset=".72" stop-color="#c9b9cf"/><stop offset="1" stop-color="#f0d2cc"/></linearGradient>
<linearGradient id="a5" x1="0" y1="0" x2="1" y2="0"><stop offset=".42" stop-color="#000"/><stop offset=".7" stop-color="#fff"/></linearGradient>
<mask id="a6"><rect width="180" height="105" fill="url(#a5)"/></mask>
<radialGradient id="a2" cx="76" cy="94" r="60" gradientUnits="userSpaceOnUse"><stop offset="0" stop-color="#fffbe8"/><stop offset=".16" stop-color="#ffeec4" stop-opacity=".95"/><stop offset=".42" stop-color="#f6c68c" stop-opacity=".6"/><stop offset="1" stop-color="#f0b088" stop-opacity="0"/></radialGradient>
<filter id="ab"><feGaussianBlur stdDeviation=".45"/></filter></defs><rect width="180" height="105" fill="url(#a1)"/><rect width="180" height="105" fill="url(#a4)" mask="url(#a6)"/><rect width="180" height="105" fill="url(#a2)"/><g filter="url(#ab)"><path d="M68 0L76 56 M84 0L90 58 M102 0L104 60 M150 0L163 68 M136 0L147 60 M68.0 0L117.9 11M118.0 0L69.5 11M118.0 0L152.4 11M150.0 0L117.9 11M68.0 0H150.0 M69.5 11L117.8 24M117.9 11L71.2 24M117.9 11L155.2 24M152.4 11L117.8 24M69.5 11H152.4 M71.2 24L117.7 38M117.8 24L73.1 38M117.8 24L158.2 38M155.2 24L117.7 38M71.2 24H155.2 M73.1 38L117.6 52M117.7 38L74.9 52M117.7 38L161.3 52M158.2 38L117.6 52M73.1 38H158.2 M74.9 52L117.5 62M117.6 52L76.3 62M117.6 52L163.4 62M161.3 52L117.5 62M74.9 52H161.3 M84 0L118 30L150 4M90 58L118 30L147 60M102 0L76 40M136 0L160 44M104 60L150 20M76 56L118 52L163 66" stroke="#8f3f2e" stroke-width="1.250" fill="none" opacity=".9"/></g><path d="M117 0L116.500 105" stroke="#b0642a" stroke-width="2.600"/><g filter="url(#ab)"><path d="M60 70L134 24L168 100 M134 24L100 105 M134 24L150 105 M134 24L124 105 M134 26L80 100 M62 72L165 60 M58 84L170 76 M66 98L172 92 M75 60L150 100 M150 55L90 105 M60 70V95 M170 62V100 M100 50L160 88 M160 45L110 100 M134 24L134 96 M60 70L88 58L120 66 M58 84L62 72" stroke="#e3d8c6" stroke-width="1.050" fill="none" opacity=".78"/></g><path d="M132 26h3.500v66h-3.500z" fill="#d9cdb8" opacity=".55"/><ellipse cx="56" cy="28" rx="9.500" ry="11" fill="#c9b8a2" transform="rotate(-15 56 28)"/><ellipse cx="53.500" cy="27" rx="6" ry="8" fill="#d8c9b2" transform="rotate(-15 53.500 27)"/><rect x="53" y="38" width="4" height="25" rx="2" fill="#cdc1ae" opacity=".9"/><ellipse cx="131.500" cy="11.500" rx="8.800" ry="7.600" fill="#d4bf9f" transform="rotate(15 131.500 11.500)"/><ellipse cx="131" cy="10" rx="6" ry="5" fill="#e2d0b4" transform="rotate(15 131 10)"/><ellipse cx="118" cy="76" rx="14.500" ry="17" fill="#ead8ba" opacity=".85" transform="rotate(28 118 76)"/><ellipse cx="115" cy="72" rx="11.500" ry="13" fill="#b39068" transform="rotate(28 115 72)"/><rect x="168" y="16" width="2.500" height="15" fill="#d8d0c4"/><rect x="174" y="56" width="2" height="30" fill="#8a8076" opacity=".8"/><rect x="160" y="22" width="1.600" height="17" fill="#cfc6b8"/><path d="M55 88l22-14 8 10-20 16z" fill="#f7e9c8" opacity=".4"/></svg></div></td><td><a class="btnc be"><svg width="24" height="24" viewBox="0 0 512 512" fill="#fff"><path d="M497.9 142.1l-46.100 46.100c-4.700 4.700-12.300 4.700-17 0l-111-111c-4.700-4.700-4.700-12.300 0-17l46.100-46.100c18.700-18.700 49.100-18.700 67.900 0l60.100 60.100c18.800 18.700 18.800 49.100 0 67.900zM284.200 99.800L21.600 362.400.4 483.900c-2.900 16.400 11.400 30.600 27.800 27.800l121.500-21.300 262.600-262.600c4.700-4.700 4.700-12.300 0-17l-111-111c-4.800-4.700-12.400-4.700-17.100 0zM124.100 339.900c-5.500-5.500-5.500-14.300 0-19.800l154-154c5.500-5.500 14.300-5.500 19.800 0s5.500 14.300 0 19.800l-154 154c-5.500 5.500-14.300 5.500-19.800 0zM88 424h48v36.300l-64.500 11.300-31.100-31.100L51.700 376H88v48z"/></svg></a><a class="btnc bd"><svg width="21" height="24" viewBox="0 0 448 512" fill="#fff"><path d="M432 32H312l-9.400-18.700A24 24 0 0 0 281.100 0H166.800a23.720 23.720 0 0 0-21.400 13.300L136 32H16A16 16 0 0 0 0 48v32a16 16 0 0 0 16 16h416a16 16 0 0 0 16-16V48a16 16 0 0 0-16-16zM53.200 467a48 48 0 0 0 47.900 45h245.800a48 48 0 0 0 47.900-45L416 128H32z"/></svg></a></td></tr>
<tr><td class="n">2</td><td>太阳能电网</td><td class="n">2950.00</td><td class="n">60（天）</td><td class="n">650.00</td><td class="n">39000.00</td><td><span class="dot g"></span>线上</td><td><div class="thumb" id="th2"><svg width="180" height="105" viewBox="0 0 180 105" preserveAspectRatio="none"><defs><linearGradient id="b1" x1="0" y1="0" x2="0" y2="1"><stop offset="0" stop-color="#56a3ea"/><stop offset=".5" stop-color="#78b8f0"/><stop offset=".78" stop-color="#a9d3f6"/><stop offset="1" stop-color="#bfe0f8"/></linearGradient>
<linearGradient id="b2" x1="0" y1="0" x2="1" y2="1"><stop offset="0" stop-color="#3d6aa3"/><stop offset=".6" stop-color="#2c5088"/><stop offset="1" stop-color="#1d3356"/></linearGradient>
<linearGradient id="b3" x1="0" y1="0" x2="1" y2="0"><stop offset="0" stop-color="#4a7fc0"/><stop offset="1" stop-color="#2f5f9e"/></linearGradient>
<pattern id="b4" width="7" height="4.500" patternUnits="userSpaceOnUse"><rect width="7" height="4.500" fill="#a98f80"/><ellipse cx="3.500" cy="2" rx="3" ry="1.600" fill="#c9ae9a"/><rect y="3.900" width="7" height=".6" fill="#7d6a60"/></pattern>
<filter id="bb"><feGaussianBlur stdDeviation="3"/></filter></defs><rect width="180" height="105" fill="url(#b1)"/><g filter="url(#bb)" fill="#b9daf7" opacity=".7"><ellipse cx="35" cy="22" rx="35" ry="5"/><ellipse cx="20" cy="52" rx="30" ry="5"/><ellipse cx="70" cy="33" rx="25" ry="4"/><ellipse cx="160" cy="36" rx="22" ry="4"/></g><rect x="118" y="0" width="62" height="4" fill="#2f7fe0" opacity=".35"/><path d="M105 79H180V105H140z" fill="url(#b4)"/><path d="M0 74.500H54L148 102.500V105H0z" fill="url(#b2)"/><path d="M4.5 74.500L3.7 101 M15 74.500L31.0 101 M23 74.500L51.8 101 M31 74.500L72.6 101 M39 74.500L93.4 101 M46 74.500L111.6 101 M54 74.500L132.4 101 M0 80L72.4 80 M0 86L92.5 86 M0 93L116.0 93" stroke="#c4d6ea" stroke-width=".8" fill="none" opacity=".85"/><path d="M60 80.500L112 80.500L150 101L125 101z" fill="#1b2c48" opacity=".55"/><path d="M0 100.500H147L150 105H0z" fill="#0f131a"/><path d="M58 80.500L95 60.500L109 66.500L63 81z" fill="url(#b3)"/><path d="M58 80.500L63 81.200L109 67.500L109 66.500z" fill="#13233c"/><path d="M60 80.800H108V82.500H66z" fill="#151515"/><path d="M122 49l18 3c4 3 4.500 9 2 13l-9 6 7 13h-9l-3-2-6-12 0-6-7 5 5 14h-6l-5-17c2-5 8-10 13-12z" fill="#40659c"/><path d="M138 60l5 1c1 4-1 7-4 8z" fill="#222b3a"/><path d="M109 36c7-2 14 1 20 8l3 6-12 3-7-3-3 4-4-2c0-6 0-12 3-16z" fill="#e9ebef"/><path d="M112 48l4 2-9 14-6 2-1-2 6-4z" fill="#c99674"/><path d="M103 65l4 2-2 3-4-2z" fill="#54b04a"/><ellipse cx="103" cy="35.500" rx="4.600" ry="5.400" fill="#c48f72"/><path d="M96.500 33c1-5 8-6 11.500-2l-1 3-5-2-4 3z" fill="#46342a"/><path d="M114 80h10l4 3h-15zM128 80h10l5 3h-16z" fill="#3a332e"/></svg></div></td><td><a class="btnc be"><svg width="24" height="24" viewBox="0 0 512 512" fill="#fff"><path d="M497.9 142.1l-46.100 46.100c-4.700 4.700-12.300 4.700-17 0l-111-111c-4.700-4.700-4.700-12.300 0-17l46.100-46.100c18.700-18.700 49.100-18.700 67.900 0l60.100 60.100c18.800 18.700 18.800 49.100 0 67.900zM284.200 99.800L21.600 362.400.4 483.900c-2.900 16.400 11.400 30.600 27.800 27.800l121.500-21.300 262.600-262.600c4.700-4.700 4.700-12.300 0-17l-111-111c-4.800-4.700-12.400-4.700-17.100 0zM124.100 339.900c-5.500-5.500-5.500-14.300 0-19.800l154-154c5.500-5.500 14.300-5.500 19.800 0s5.500 14.300 0 19.800l-154 154c-5.500 5.500-14.300 5.500-19.800 0zM88 424h48v36.300l-64.500 11.300-31.100-31.100L51.700 376H88v48z"/></svg></a><a class="btnc bd"><svg width="21" height="24" viewBox="0 0 448 512" fill="#fff"><path d="M432 32H312l-9.400-18.700A24 24 0 0 0 281.100 0H166.800a23.720 23.720 0 0 0-21.400 13.300L136 32H16A16 16 0 0 0 0 48v32a16 16 0 0 0 16 16h416a16 16 0 0 0 16-16V48a16 16 0 0 0-16-16zM53.200 467a48 48 0 0 0 47.900 45h245.800a48 48 0 0 0 47.900-45L416 128H32z"/></svg></a></td></tr>
<tr><td class="n">3</td><td>发电厂</td><td class="n">6100.00</td><td class="n">60（天）</td><td class="n">1350.00</td><td class="n">81000.00</td><td><span class="dot r"></span>离线</td><td><div class="thumb" id="th3"><svg width="180" height="105" viewBox="0 0 180 105" preserveAspectRatio="none"><defs><linearGradient id="c1" x1="0" y1="0" x2="0" y2="1"><stop offset="0" stop-color="#1e3b73"/><stop offset=".45" stop-color="#30528d"/><stop offset=".75" stop-color="#6483b3"/><stop offset=".9" stop-color="#b7c3d8"/></linearGradient>
<linearGradient id="c2" x1="0" y1="0" x2="1" y2="0"><stop offset="0" stop-color="#e6dfd4"/><stop offset=".55" stop-color="#d5ccc0"/><stop offset="1" stop-color="#b4aa9e"/></linearGradient>
<linearGradient id="c3" x1="0" y1="0" x2="1" y2="0"><stop offset="0" stop-color="#bdb5aa"/><stop offset="1" stop-color="#8f8881"/></linearGradient>
<filter id="cb" x="-20%" y="-20%" width="140%" height="140%"><feGaussianBlur stdDeviation="1.700"/></filter></defs><rect width="180" height="105" fill="url(#c1)"/><g filter="url(#cb)" fill="#fff"><path d="M30 30C27 18 30 6 34 -6H60C62 6 64 18 61 30Z"/><ellipse cx="45" cy="12" rx="15" ry="16"/><ellipse cx="46" cy="24" rx="14" ry="7"/><ellipse cx="26" cy="43" rx="5" ry="9" opacity=".9"/><ellipse cx="33" cy="33" rx="4" ry="6" opacity=".7"/><path d="M65 58C64 48 67 38 72 30C78 34 84 46 83 58Z"/><ellipse cx="74" cy="40" rx="7" ry="9"/><path d="M94 44C90 36 88 28 96 22C106 18 118 30 120 44Z"/><ellipse cx="104" cy="32" rx="12" ry="9"/><ellipse cx="93" cy="22" rx="9" ry="5" opacity=".9"/><ellipse cx="84" cy="12" rx="8" ry="4" opacity=".8"/><ellipse cx="73" cy="5" rx="8" ry="3.500" opacity=".75"/><ellipse cx="63" cy="12" rx="4" ry="7" opacity=".55"/></g><path d="M14 51C14.6 68.2 12.6 80.1 10 92L27 92C28.9 80.1 29.4 68.2 30 51Z" fill="url(#c2)"/><ellipse cx="22.0" cy="51" rx="8.0" ry="1.300" fill="#a79e92"/><path d="M64 57C64.8 71.7 66.1 81.8 70 92L88 92C85.4 81.8 83.2 71.7 84 57Z" fill="url(#c3)"/><ellipse cx="74.0" cy="57" rx="10.0" ry="1.300" fill="#a79e92"/><path d="M29 28C30.3 54.9 26.6 73.4 22 92L70 92C64.2 73.4 59.7 54.9 61 28Z" fill="url(#c2)"/><ellipse cx="45.0" cy="28" rx="16.0" ry="1.300" fill="#a79e92"/><path d="M94 43C95.0 63.6 92.2 77.8 89 92L127 92C122.5 77.8 119.0 63.6 120 43Z" fill="url(#c2)"/><ellipse cx="107.0" cy="43" rx="13.0" ry="1.300" fill="#a79e92"/><rect x="19" y="90.500" width="52" height="1.800" fill="#2b2b2b" opacity=".75"/><rect x="89" y="91" width="38" height="1.500" fill="#2b2b2b" opacity=".7"/><rect x="128" y="86" width="22" height="6" fill="#5b6a7b"/><rect x="137" y="88" width="20" height="5" fill="#e8ecf0"/><rect x="150" y="85" width="8" height="5" fill="#f1f3f5"/><rect x="158" y="74" width="1.800" height="18" fill="#d7d7d7"/><rect x="166" y="83" width="12" height="7" rx="2" fill="#c9c9c6"/><ellipse cx="170" cy="80" rx="5" ry="4" fill="#fff" opacity=".7"/><rect x="160" y="88" width="20" height="4" fill="#3d4a35"/><rect y="92.500" width="180" height="12.500" fill="#9a7c44"/><rect y="92.500" width="180" height="1.600" fill="#c4b49a"/><rect y="94" width="180" height="3" fill="#80743c" opacity=".6"/><path d="M0 84l3 4 3-3 4 8 3-1 3 8 1 5H0z" fill="#26401f"/></svg></div></td><td><a class="btnc be"><svg width="24" height="24" viewBox="0 0 512 512" fill="#fff"><path d="M497.9 142.1l-46.100 46.100c-4.700 4.700-12.300 4.700-17 0l-111-111c-4.700-4.700-4.700-12.300 0-17l46.100-46.100c18.700-18.700 49.100-18.700 67.900 0l60.100 60.100c18.800 18.700 18.800 49.100 0 67.900zM284.200 99.800L21.600 362.400.4 483.900c-2.900 16.400 11.400 30.600 27.800 27.800l121.500-21.300 262.600-262.600c4.700-4.700 4.700-12.300 0-17l-111-111c-4.800-4.700-12.400-4.700-17.100 0zM124.100 339.900c-5.500-5.500-5.500-14.300 0-19.800l154-154c5.500-5.500 14.300-5.500 19.800 0s5.500 14.300 0 19.800l-154 154c-5.500 5.500-14.300 5.500-19.800 0zM88 424h48v36.300l-64.500 11.300-31.100-31.100L51.700 376H88v48z"/></svg></a><a class="btnc bd"><svg width="21" height="24" viewBox="0 0 448 512" fill="#fff"><path d="M432 32H312l-9.400-18.700A24 24 0 0 0 281.100 0H166.800a23.720 23.720 0 0 0-21.400 13.300L136 32H16A16 16 0 0 0 0 48v32a16 16 0 0 0 16 16h416a16 16 0 0 0 16-16V48a16 16 0 0 0-16-16zM53.200 467a48 48 0 0 0 47.900 45h245.800a48 48 0 0 0 47.900-45L416 128H32z"/></svg></a></td></tr>
<tr><td class="n">4</td><td>房地产</td><td class="n">12500.00</td><td class="n">60（天）</td><td class="n">2550.00</td><td class="n">153000.00</td><td><span class="dot g"></span>线上</td><td><div class="thumb" id="th4"><svg width="180" height="105" viewBox="0 0 180 105" preserveAspectRatio="none"><defs><linearGradient id="d1" x1="0" y1="0" x2="1" y2=".2"><stop offset="0" stop-color="#b9cfde"/><stop offset=".35" stop-color="#e7edf1"/><stop offset=".6" stop-color="#c9dbe6"/><stop offset="1" stop-color="#86b2cf"/></linearGradient>
<linearGradient id="d2" x1="0" y1="0" x2="0" y2="1"><stop offset="0" stop-color="#fff" stop-opacity="0"/><stop offset=".55" stop-color="#fff" stop-opacity=".65"/><stop offset=".62" stop-color="#fff" stop-opacity=".1"/><stop offset="1" stop-color="#fff" stop-opacity="0"/></linearGradient>
<pattern id="d3" width="3.400" height="2.300" patternUnits="userSpaceOnUse"><rect width="3.400" height="2.300" fill="#b7aca0"/><rect x=".5" y=".5" width="2" height="1.100" fill="#8d8f9a"/></pattern>
<pattern id="d4" width="3" height="2.100" patternUnits="userSpaceOnUse"><rect width="3" height="2.100" fill="#c2b8ac"/><rect x=".5" y=".5" width="1.700" height="1" fill="#a09a98"/></pattern>
<filter id="db"><feGaussianBlur stdDeviation="1.100"/></filter><filter id="db2"><feGaussianBlur stdDeviation=".4"/></filter></defs><rect width="180" height="105" fill="url(#d1)"/><rect width="180" height="105" fill="url(#d2)"/><g filter="url(#db)"><rect x="114" y="61.500" width="70" height="5" fill="#6b98be" opacity=".85"/><rect x="114" y="66" width="70" height="20" fill="#b4bcc4"/><rect x="152" y="66" width="32" height="13" fill="#c2a78a" opacity=".85"/><rect x="118" y="70" width="30" height="6" fill="#d5d8dc" opacity=".8"/><rect x="114" y="76" width="70" height="8" fill="#7f9478" opacity=".75"/><rect x="132" y="79" width="18" height="4" fill="#e6e6ea" opacity=".8"/></g><g filter="url(#db2)"><path d="M56 46l5-4 3 2V68l-8-2z" fill="#8f8a86"/><path d="M64 38l7-4v48l-7-3z" fill="url(#d4)"/><path d="M71 33l6-3v56l-6-3z" fill="#a89e92"/><path d="M77 30l8-4 2 1v62l-10-3z" fill="url(#d4)"/><path d="M87 29l10-5v66l-10-2z" fill="url(#d4)"/><path d="M85 27l3 1v60l-3-1z" fill="#8a8580"/><path d="M97 24l2-1 9-5 2 2v70l-13-2z" fill="url(#d4)"/><path d="M97 26h1.500v62h-1.500z" fill="#a0694c"/><path d="M108 18l3 2v70l-3-1z" fill="#8e8a88"/><path d="M111 23l6 3v60l-6 4z" fill="#a39a90"/></g><rect x="51" y="66" width="17" height="17" fill="#ae8663"/><rect x="51" y="66" width="3" height="17" fill="#c79a55"/><ellipse cx="60" cy="63" rx="5" ry="4" fill="#5b8a3a"/><g filter="url(#db2)"><path d="M0 8l9 2v92H0z" fill="url(#d3)"/><path d="M9 10h1.500v90H9z" fill="#6e6a68"/><path d="M11 7l24 9v86H11z" fill="url(#d3)"/><path d="M23 14h2.500v84H23z" fill="#77746f"/><path d="M13 9h1.500v90H13z" fill="#b89f7c"/><path d="M35 17l7 3v68l-7 2z" fill="#a59b90"/><path d="M36 20l6 3 0 6-6-3z" fill="#8d8f9a"/><path d="M42 22l2 1v62l-2 1z" fill="#6b6865"/><path d="M44 26l6 2v56l-6 3z" fill="#a8a29a"/></g><g filter="url(#db)"><path d="M0 100l20-4 16-8 14-2 10-6 14 0 16 8 18 3 16-4 14 2 20-4 22 0V105H0z" fill="#4c7a2f"/><ellipse cx="62" cy="84" rx="9" ry="6" fill="#3d6a28"/><ellipse cx="98" cy="93" rx="12" ry="6" fill="#5d8c38"/><ellipse cx="140" cy="94" rx="16" ry="7" fill="#3f6b2a"/><ellipse cx="46" cy="96" rx="10" ry="7" fill="#54862f"/><ellipse cx="120" cy="100" rx="14" ry="5" fill="#2e4f22"/><ellipse cx="78" cy="99" rx="10" ry="4" fill="#2c4a20"/><ellipse cx="170" cy="96" rx="10" ry="8" fill="#4d7c31"/></g></svg></div></td><td><a class="btnc be"><svg width="24" height="24" viewBox="0 0 512 512" fill="#fff"><path d="M497.9 142.1l-46.100 46.100c-4.700 4.700-12.300 4.700-17 0l-111-111c-4.700-4.700-4.700-12.300 0-17l46.100-46.100c18.700-18.700 49.100-18.700 67.900 0l60.100 60.100c18.800 18.700 18.800 49.100 0 67.900zM284.200 99.800L21.600 362.400.4 483.900c-2.900 16.400 11.400 30.600 27.800 27.800l121.500-21.300 262.600-262.600c4.700-4.700 4.700-12.300 0-17l-111-111c-4.800-4.700-12.400-4.700-17.100 0zM124.100 339.900c-5.500-5.500-5.500-14.300 0-19.800l154-154c5.500-5.500 14.300-5.500 19.800 0s5.500 14.300 0 19.800l-154 154c-5.500 5.500-14.300 5.500-19.800 0zM88 424h48v36.300l-64.500 11.300-31.100-31.100L51.700 376H88v48z"/></svg></a><a class="btnc bd"><svg width="21" height="24" viewBox="0 0 448 512" fill="#fff"><path d="M432 32H312l-9.400-18.700A24 24 0 0 0 281.100 0H166.800a23.720 23.720 0 0 0-21.400 13.300L136 32H16A16 16 0 0 0 0 48v32a16 16 0 0 0 16 16h416a16 16 0 0 0 16-16V48a16 16 0 0 0-16-16zM53.200 467a48 48 0 0 0 47.900 45h245.800a48 48 0 0 0 47.900-45L416 128H32z"/></svg></a></td></tr>
<tr><td class="n">5</td><td>原油精炼厂</td><td class="n">29500.00</td><td class="n">60（天）</td><td class="n">7500.00</td><td class="n">450000.00</td><td><span class="dot r"></span>离线</td><td><div class="thumb" id="th5"><svg width="180" height="105" viewBox="0 0 180 105" preserveAspectRatio="none"><defs><linearGradient id="e1" x1="0" y1="0" x2="0" y2="1"><stop offset="0" stop-color="#177ae0"/><stop offset=".3" stop-color="#3f93e8"/><stop offset=".55" stop-color="#86bff3"/><stop offset=".68" stop-color="#b4dafa"/></linearGradient>
<linearGradient id="e2" x1="0" y1="0" x2="0" y2="1"><stop offset="0" stop-color="#d2ae72"/><stop offset=".4" stop-color="#dcb878"/><stop offset="1" stop-color="#cfa663"/></linearGradient>
<filter id="eb"><feGaussianBlur stdDeviation=".35"/></filter></defs><rect width="180" height="105" fill="url(#e1)"/><path d="M0 70.500L60 68.500L100 69L128 66L180 64V105H0z" fill="url(#e2)"/><path d="M128 66L180 64V78L128 74z" fill="#b58d48" opacity=".8"/><path d="M140 72h40v5h-40z" fill="#5c6a38" opacity=".35"/><rect x="30" y="70" width="16" height="1.500" fill="#f3e9e4"/><rect x="18" y="72" width="4" height="1.500" fill="#3b66b5"/><path d="M114.500 32v38M111 35.500h8.500M123.800 44v28M142.500 50v30M140 51.500h4M150.500 57v16M162 58v8" stroke="#d8d8d8" stroke-width="1.100" fill="none"/><path d="M124 44v28" stroke="#384a77" stroke-width=".9"/><rect x="116" y="56" width="4.500" height="6" fill="#eee"/><path d="M63.500 40v45" stroke="#8a7040" stroke-width=".9"/><path d="M52 60v12" stroke="#a08058" stroke-width=".7"/><path d="M88 35L80 72M88 35L97 72M92 37L99 70M84 45h8M83 52h10M82 59h13M81 66h15" stroke="#2e6fc4" stroke-width="1.600" fill="none"/><path d="M78 71h26v3H78z" fill="#2c68ba"/><path d="M106 46L104 66M98 48l8-2" stroke="#3a76c8" stroke-width="1.300" fill="none"/><path d="M100 62c2-5 5-5 7 0l4 8h-12z" fill="#cfa550"/><path d="M107 66l6-3 4 3-3 10h-8z" fill="#d0a24a"/><path d="M107 72l5-5 3 7-3 3z" fill="#d83a32"/><rect x="104" y="72" width="8" height="8" fill="#3d2e26"/><rect x="112" y="70" width="9" height="12" fill="#c9a466"/><path d="M67 22.500l3.500-2.500 40 21.500 1.500 3.500-2.500 2.500-4.500-1-38.500-20z" fill="#cfa032"/><path d="M62 36c-2-10 0-18 5-24l3-.5 6 12-2 3-6 2c-3 3-3 6-3 8l0 5h-2.500z" fill="#d0a233"/><path d="M67 15l3-2 3 7-3 2z" fill="#d9403a"/><path d="M66 24l12 6" stroke="#3a3327" stroke-width="1.200"/><path d="M96 49l14-3 1 1.500-14 4z" fill="#4a7ecb"/><g stroke="#4b3a30" fill="none" filter="url(#eb)"><path d="M44 84l22-2 10 4 30 1 30 6 44 3" stroke-width="1.600"/><path d="M55 90l6-7 4 8M112 84l8 12M150 96l8-10 6 11M118 100l8-6 8 9M75 86l5 9" stroke-width="1.300"/><path d="M62 74v10M60 80h8" stroke-width="1.500"/><path d="M150 78h30" stroke-width="1" stroke="#7b6a52"/></g><path d="M172 105l8-6v6z" fill="#5f5242"/></svg></div></td><td><a class="btnc be"><svg width="24" height="24" viewBox="0 0 512 512" fill="#fff"><path d="M497.9 142.1l-46.100 46.100c-4.700 4.700-12.300 4.700-17 0l-111-111c-4.700-4.700-4.700-12.300 0-17l46.100-46.100c18.700-18.700 49.100-18.700 67.900 0l60.100 60.100c18.800 18.700 18.800 49.100 0 67.900zM284.200 99.800L21.600 362.400.4 483.900c-2.900 16.400 11.400 30.600 27.800 27.800l121.500-21.300 262.600-262.600c4.700-4.700 4.700-12.300 0-17l-111-111c-4.800-4.700-12.400-4.700-17.100 0zM124.100 339.900c-5.500-5.500-5.500-14.300 0-19.800l154-154c5.500-5.500 14.300-5.500 19.800 0s5.500 14.300 0 19.800l-154 154c-5.500 5.500-14.300 5.500-19.800 0zM88 424h48v36.300l-64.500 11.300-31.100-31.100L51.700 376H88v48z"/></svg></a><a class="btnc bd"><svg width="21" height="24" viewBox="0 0 448 512" fill="#fff"><path d="M432 32H312l-9.400-18.700A24 24 0 0 0 281.100 0H166.800a23.720 23.720 0 0 0-21.400 13.300L136 32H16A16 16 0 0 0 0 48v32a16 16 0 0 0 16 16h416a16 16 0 0 0 16-16V48a16 16 0 0 0-16-16zM53.200 467a48 48 0 0 0 47.900 45h245.800a48 48 0 0 0 47.900-45L416 128H32z"/></svg></a></td></tr>
</tbody></table>

<div class="abs" style="left:403px;top:1363px;font-size:24px;line-height:36px;white-space:nowrap">显示 1 至 5 条，共 5 条</div>
<div class="abs" style="left:2200px;top:1345px;width:269px;height:56px;border:1px solid #dddfeb;border-radius:8px;background:#fff"></div>
<div class="abs" style="left:2308px;top:1345px;width:52px;height:56px;background:#4e73df"></div>
<div class="abs" style="left:2218px;top:1356px;font-size:24px;line-height:36px;white-space:nowrap">以前的</div>
<div class="abs" style="left:2308px;top:1356px;width:52px;text-align:center;font-size:24px;line-height:36px;color:#fff">1</div>
<div class="abs" style="left:2378px;top:1356px;font-size:24px;line-height:36px;white-space:nowrap">下一个</div>

</div>
<!-- scrollbar -->
<div class="abs" style="left:2536px;top:75px;width:24px;height:1409px;background:#f1f1f1"></div>
<div class="abs" style="left:2538px;top:100px;width:21px;height:1240px;background:#c1c1c1"></div>
<svg class="abs" style="left:2543px;top:85px" width="11" height="6" viewBox="0 0 11 6" fill="#a3a3a3"><path d="M5.500 0L11 6H0z"/></svg>
<svg class="abs" style="left:2542.500px;top:1469px" width="11.500" height="6.300" viewBox="0 0 13 7" fill="#505050"><path d="M0 0h13L6.500 7z"/></svg>
<!-- bottom strip -->
<div class="abs" style="left:0;top:1484px;width:2560px;height:4px;background:#1f2a30"></div>
<div class="abs" style="left:72px;top:1484px;width:516px;height:4px;background:#fafafa;border-top:1px solid #b5b5b5"></div>
<div class="abs" style="left:965px;top:1484px;width:72px;height:4px;background:#4a555b"></div>

<div id="wm" class="abs"><i style="left:-183.3px;top:-170.7px"><b>v</b><b>i</b><b>p</b><b>.</b><b>9</b><b>f</b><b>y</b><b><u>m</u></b><b>.</b><b>c</b><b>o</b><b><u>m</u></b></i><i style="left:-161.7px;top:417.6px"><b>v</b><b>i</b><b>p</b><b>.</b><b>9</b><b>f</b><b>y</b><b><u>m</u></b><b>.</b><b>c</b><b>o</b><b><u>m</u></b></i><i style="left:-140.1px;top:1005.9px"><b>v</b><b>i</b><b>p</b><b>.</b><b>9</b><b>f</b><b>y</b><b><u>m</u></b><b>.</b><b>c</b><b>o</b><b><u>m</u></b></i><i style="left:-19.9px;top:276.1px"><b>v</b><b>i</b><b>p</b><b>.</b><b>9</b><b>f</b><b>y</b><b><u>m</u></b><b>.</b><b>c</b><b>o</b><b><u>m</u></b></i><i style="left:1.7px;top:864.4px"><b>v</b><b>i</b><b>p</b><b>.</b><b>9</b><b>f</b><b>y</b><b><u>m</u></b><b>.</b><b>c</b><b>o</b><b><u>m</u></b></i><i style="left:23.3px;top:1452.7px"><b>v</b><b>i</b><b>p</b><b>.</b><b>9</b><b>f</b><b>y</b><b><u>m</u></b><b>.</b><b>c</b><b>o</b><b><u>m</u></b></i><i style="left:121.8px;top:134.6px"><b>v</b><b>i</b><b>p</b><b>.</b><b>9</b><b>f</b><b>y</b><b><u>m</u></b><b>.</b><b>c</b><b>o</b><b><u>m</u></b></i><i style="left:143.4px;top:722.9px"><b>v</b><b>i</b><b>p</b><b>.</b><b>9</b><b>f</b><b>y</b><b><u>m</u></b><b>.</b><b>c</b><b>o</b><b><u>m</u></b></i><i style="left:165.0px;top:1311.2px"><b>v</b><b>i</b><b>p</b><b>.</b><b>9</b><b>f</b><b>y</b><b><u>m</u></b><b>.</b><b>c</b><b>o</b><b><u>m</u></b></i><i style="left:263.5px;top:-6.9px"><b>v</b><b>i</b><b>p</b><b>.</b><b>9</b><b>f</b><b>y</b><b><u>m</u></b><b>.</b><b>c</b><b>o</b><b><u>m</u></b></i><i style="left:285.1px;top:581.4px"><b>v</b><b>i</b><b>p</b><b>.</b><b>9</b><b>f</b><b>y</b><b><u>m</u></b><b>.</b><b>c</b><b>o</b><b><u>m</u></b></i><i style="left:306.8px;top:1169.7px"><b>v</b><b>i</b><b>p</b><b>.</b><b>9</b><b>f</b><b>y</b><b><u>m</u></b><b>.</b><b>c</b><b>o</b><b><u>m</u></b></i><i style="left:405.3px;top:-148.4px"><b>v</b><b>i</b><b>p</b><b>.</b><b>9</b><b>f</b><b>y</b><b><u>m</u></b><b>.</b><b>c</b><b>o</b><b><u>m</u></b></i><i style="left:426.9px;top:439.9px"><b>v</b><b>i</b><b>p</b><b>.</b><b>9</b><b>f</b><b>y</b><b><u>m</u></b><b>.</b><b>c</b><b>o</b><b><u>m</u></b></i><i style="left:448.5px;top:1028.2px"><b>v</b><b>i</b><b>p</b><b>.</b><b>9</b><b>f</b><b>y</b><b><u>m</u></b><b>.</b><b>c</b><b>o</b><b><u>m</u></b></i><i style="left:568.6px;top:298.4px"><b>v</b><b>i</b><b>p</b><b>.</b><b>9</b><b>f</b><b>y</b><b><u>m</u></b><b>.</b><b>c</b><b>o</b><b><u>m</u></b></i><i style="left:590.2px;top:886.7px"><b>v</b><b>i</b><b>p</b><b>.</b><b>9</b><b>f</b><b>y</b><b><u>m</u></b><b>.</b><b>c</b><b>o</b><b><u>m</u></b></i><i style="left:611.8px;top:1475.0px"><b>v</b><b>i</b><b>p</b><b>.</b><b>9</b><b>f</b><b>y</b><b><u>m</u></b><b>.</b><b>c</b><b>o</b><b><u>m</u></b></i><i style="left:710.4px;top:156.9px"><b>v</b><b>i</b><b>p</b><b>.</b><b>9</b><b>f</b><b>y</b><b><u>m</u></b><b>.</b><b>c</b><b>o</b><b><u>m</u></b></i><i style="left:732.0px;top:745.2px"><b>v</b><b>i</b><b>p</b><b>.</b><b>9</b><b>f</b><b>y</b><b><u>m</u></b><b>.</b><b>c</b><b>o</b><b><u>m</u></b></i><i style="left:753.6px;top:1333.5px"><b>v</b><b>i</b><b>p</b><b>.</b><b>9</b><b>f</b><b>y</b><b><u>m</u></b><b>.</b><b>c</b><b>o</b><b><u>m</u></b></i><i style="left:852.1px;top:15.4px"><b>v</b><b>i</b><b>p</b><b>.</b><b>9</b><b>f</b><b>y</b><b><u>m</u></b><b>.</b><b>c</b><b>o</b><b><u>m</u></b></i><i style="left:873.8px;top:603.7px"><b>v</b><b>i</b><b>p</b><b>.</b><b>9</b><b>f</b><b>y</b><b><u>m</u></b><b>.</b><b>c</b><b>o</b><b><u>m</u></b></i><i style="left:895.3px;top:1192.0px"><b>v</b><b>i</b><b>p</b><b>.</b><b>9</b><b>f</b><b>y</b><b><u>m</u></b><b>.</b><b>c</b><b>o</b><b><u>m</u></b></i><i style="left:993.9px;top:-126.1px"><b>v</b><b>i</b><b>p</b><b>.</b><b>9</b><b>f</b><b>y</b><b><u>m</u></b><b>.</b><b>c</b><b>o</b><b><u>m</u></b></i><i style="left:1015.5px;top:462.2px"><b>v</b><b>i</b><b>p</b><b>.</b><b>9</b><b>f</b><b>y</b><b><u>m</u></b><b>.</b><b>c</b><b>o</b><b><u>m</u></b></i><i style="left:1037.1px;top:1050.5px"><b>v</b><b>i</b><b>p</b><b>.</b><b>9</b><b>f</b><b>y</b><b><u>m</u></b><b>.</b><b>c</b><b>o</b><b><u>m</u></b></i><i style="left:1157.2px;top:320.7px"><b>v</b><b>i</b><b>p</b><b>.</b><b>9</b><b>f</b><b>y</b><b><u>m</u></b><b>.</b><b>c</b><b>o</b><b><u>m</u></b></i><i style="left:1178.8px;top:909.0px"><b>v</b><b>i</b><b>p</b><b>.</b><b>9</b><b>f</b><b>y</b><b><u>m</u></b><b>.</b><b>c</b><b>o</b><b><u>m</u></b></i><i style="left:1200.5px;top:1497.3px"><b>v</b><b>i</b><b>p</b><b>.</b><b>9</b><b>f</b><b>y</b><b><u>m</u></b><b>.</b><b>c</b><b>o</b><b><u>m</u></b></i><i style="left:1299.0px;top:179.2px"><b>v</b><b>i</b><b>p</b><b>.</b><b>9</b><b>f</b><b>y</b><b><u>m</u></b><b>.</b><b>c</b><b>o</b><b><u>m</u></b></i><i style="left:1320.6px;top:767.5px"><b>v</b><b>i</b><b>p</b><b>.</b><b>9</b><b>f</b><b>y</b><b><u>m</u></b><b>.</b><b>c</b><b>o</b><b><u>m</u></b></i><i style="left:1342.2px;top:1355.8px"><b>v</b><b>i</b><b>p</b><b>.</b><b>9</b><b>f</b><b>y</b><b><u>m</u></b><b>.</b><b>c</b><b>o</b><b><u>m</u></b></i><i style="left:1440.7px;top:37.7px"><b>v</b><b>i</b><b>p</b><b>.</b><b>9</b><b>f</b><b>y</b><b><u>m</u></b><b>.</b><b>c</b><b>o</b><b><u>m</u></b></i><i style="left:1462.3px;top:626.0px"><b>v</b><b>i</b><b>p</b><b>.</b><b>9</b><b>f</b><b>y</b><b><u>m</u></b><b>.</b><b>c</b><b>o</b><b><u>m</u></b></i><i style="left:1483.9px;top:1214.3px"><b>v</b><b>i</b><b>p</b><b>.</b><b>9</b><b>f</b><b>y</b><b><u>m</u></b><b>.</b><b>c</b><b>o</b><b><u>m</u></b></i><i style="left:1582.5px;top:-103.8px"><b>v</b><b>i</b><b>p</b><b>.</b><b>9</b><b>f</b><b>y</b><b><u>m</u></b><b>.</b><b>c</b><b>o</b><b><u>m</u></b></i><i style="left:1604.1px;top:484.5px"><b>v</b><b>i</b><b>p</b><b>.</b><b>9</b><b>f</b><b>y</b><b><u>m</u></b><b>.</b><b>c</b><b>o</b><b><u>m</u></b></i><i style="left:1625.7px;top:1072.8px"><b>v</b><b>i</b><b>p</b><b>.</b><b>9</b><b>f</b><b>y</b><b><u>m</u></b><b>.</b><b>c</b><b>o</b><b><u>m</u></b></i><i style="left:1745.8px;top:343.0px"><b>v</b><b>i</b><b>p</b><b>.</b><b>9</b><b>f</b><b>y</b><b><u>m</u></b><b>.</b><b>c</b><b>o</b><b><u>m</u></b></i><i style="left:1767.4px;top:931.3px"><b>v</b><b>i</b><b>p</b><b>.</b><b>9</b><b>f</b><b>y</b><b><u>m</u></b><b>.</b><b>c</b><b>o</b><b><u>m</u></b></i><i style="left:1887.6px;top:201.5px"><b>v</b><b>i</b><b>p</b><b>.</b><b>9</b><b>f</b><b>y</b><b><u>m</u></b><b>.</b><b>c</b><b>o</b><b><u>m</u></b></i><i style="left:1909.2px;top:789.8px"><b>v</b><b>i</b><b>p</b><b>.</b><b>9</b><b>f</b><b>y</b><b><u>m</u></b><b>.</b><b>c</b><b>o</b><b><u>m</u></b></i><i style="left:1930.8px;top:1378.1px"><b>v</b><b>i</b><b>p</b><b>.</b><b>9</b><b>f</b><b>y</b><b><u>m</u></b><b>.</b><b>c</b><b>o</b><b><u>m</u></b></i><i style="left:2029.3px;top:60.0px"><b>v</b><b>i</b><b>p</b><b>.</b><b>9</b><b>f</b><b>y</b><b><u>m</u></b><b>.</b><b>c</b><b>o</b><b><u>m</u></b></i><i style="left:2050.9px;top:648.3px"><b>v</b><b>i</b><b>p</b><b>.</b><b>9</b><b>f</b><b>y</b><b><u>m</u></b><b>.</b><b>c</b><b>o</b><b><u>m</u></b></i><i style="left:2072.5px;top:1236.6px"><b>v</b><b>i</b><b>p</b><b>.</b><b>9</b><b>f</b><b>y</b><b><u>m</u></b><b>.</b><b>c</b><b>o</b><b><u>m</u></b></i><i style="left:2171.1px;top:-81.5px"><b>v</b><b>i</b><b>p</b><b>.</b><b>9</b><b>f</b><b>y</b><b><u>m</u></b><b>.</b><b>c</b><b>o</b><b><u>m</u></b></i><i style="left:2192.7px;top:506.8px"><b>v</b><b>i</b><b>p</b><b>.</b><b>9</b><b>f</b><b>y</b><b><u>m</u></b><b>.</b><b>c</b><b>o</b><b><u>m</u></b></i><i style="left:2214.3px;top:1095.1px"><b>v</b><b>i</b><b>p</b><b>.</b><b>9</b><b>f</b><b>y</b><b><u>m</u></b><b>.</b><b>c</b><b>o</b><b><u>m</u></b></i><i style="left:2312.9px;top:-223.0px"><b>v</b><b>i</b><b>p</b><b>.</b><b>9</b><b>f</b><b>y</b><b><u>m</u></b><b>.</b><b>c</b><b>o</b><b><u>m</u></b></i><i style="left:2334.5px;top:365.3px"><b>v</b><b>i</b><b>p</b><b>.</b><b>9</b><b>f</b><b>y</b><b><u>m</u></b><b>.</b><b>c</b><b>o</b><b><u>m</u></b></i><i style="left:2356.1px;top:953.6px"><b>v</b><b>i</b><b>p</b><b>.</b><b>9</b><b>f</b><b>y</b><b><u>m</u></b><b>.</b><b>c</b><b>o</b><b><u>m</u></b></i><i style="left:2476.2px;top:223.8px"><b>v</b><b>i</b><b>p</b><b>.</b><b>9</b><b>f</b><b>y</b><b><u>m</u></b><b>.</b><b>c</b><b>o</b><b><u>m</u></b></i><i style="left:2497.8px;top:812.1px"><b>v</b><b>i</b><b>p</b><b>.</b><b>9</b><b>f</b><b>y</b><b><u>m</u></b><b>.</b><b>c</b><b>o</b><b><u>m</u></b></i><i style="left:2519.4px;top:1400.4px"><b>v</b><b>i</b><b>p</b><b>.</b><b>9</b><b>f</b><b>y</b><b><u>m</u></b><b>.</b><b>c</b><b>o</b><b><u>m</u></b></i></div>
</body>
</html>
